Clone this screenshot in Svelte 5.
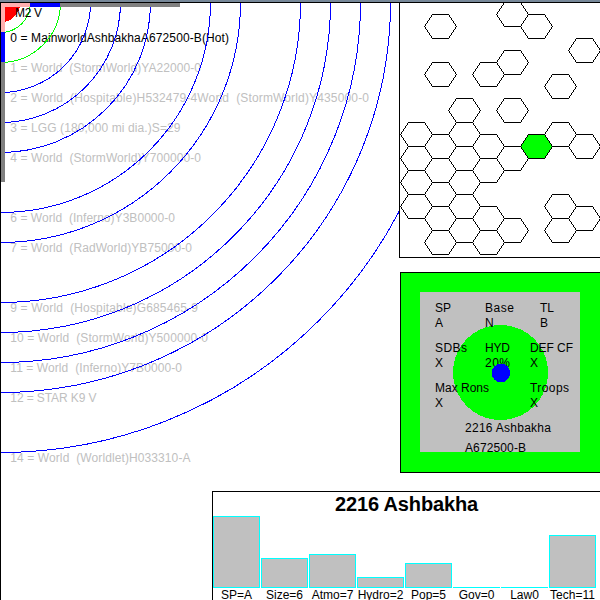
<script>
  const orbits = [
    { n: 0, text: '0 = MainworldAshbakhaA672500-B(Hot)', end: 229, main: true },
    { n: 1, text: '1 = World  (StormWorld)YA22000-0', end: 201 },
    { n: 2, text: '2 = World  (Hospitable)H532479-4World  (StormWorld)Y435000-0', end: 369 },
    { n: 3, text: '3 = LGG (180,000 mi dia.)S=29', end: 180.5 },
    { n: 4, text: '4 = World  (StormWorld)Y700000-0', end: 201 },
    { n: 6, text: '6 = World  (Inferno)Y3B0000-0', end: 175 },
    { n: 7, text: '7 = World  (RadWorld)YB75000-0', end: 192 },
    { n: 9, text: '9 = World  (Hospitable)G685465-9', end: 198 },
    { n: 10, text: '10 = World  (StormWorld)Y500000-0', end: 208 },
    { n: 11, text: '11 = World  (Inferno)Y7B0000-0', end: 182 },
    { n: 12, text: '12 = STAR K9 V', end: 96.5 },
    { n: 14, text: '14 = World  (Worldlet)H033310-A', end: 190.5 }
  ];

  // Top edges of the hexes in each map column
  const columns = [
    [122, 146, 170, 194],
    [14, 62, 134, 158, 182, 206, 230],
    [98, 122, 146, 170, 194, 218],
    [62, 134, 158, 206, 230],
    [2, 50, 98, 146, 218],
    [14],
    [74, 122, 194, 218],
    [38, 134, 206]
  ];
  const hexes = columns.flatMap((tops, c) => tops.map((y) => hex(c * 24, y - 3)));
  const current = hex(120, 131);

  function hex(x, y) {
    const l = x + 0.5;
    const t = y + 0.5;
    return `${l},${t + 12} ${l + 8},${t} ${l + 24},${t} ${l + 32},${t + 12} ${l + 24},${t + 24} ${l + 8},${t + 24}`;
  }

  // text, x, baseline, width
  const stats = [
    ['SP', 435, 312, 16], ['Base', 485, 312, 29], ['TL', 540, 312, 14],
    ['A', 435, 327, 8], ['N', 485, 327, 9], ['B', 540, 327, 8],
    ['SDBs', 435, 352, 32], ['HYD', 485, 352, 25], ['DEF CF', 530, 352, 43],
    ['X', 435, 367, 8], ['20%', 485, 367, 25], ['X', 530, 367, 8],
    ['Max Rons', 435, 392, 54], ['Troops', 530, 392, 39],
    ['X', 435, 407, 8], ['X', 530, 407, 8],
    ['2216 Ashbakha', 465, 432, 86], ['A672500-B', 465, 452, 61]
  ];

  const bars = [
    { label: 'SP=A', h: 72 },
    { label: 'Size=6', h: 30 },
    { label: 'Atmo=7', h: 34 },
    { label: 'Hydro=2', h: 11 },
    { label: 'Pop=5', h: 25 },
    { label: 'Gov=0', h: 1 },
    { label: 'Law0', h: 1 },
    { label: 'Tech=11', h: 53 }
  ];
</script>

<div class="screen">
  <header></header>
  <main>
    <section class="system">
      <svg width="398" height="597" viewBox="1 3 398 597">
        <circle class="star" cx="0" cy="2" r="20.5" />
        {#each orbits as o}
          <text class:main={o.main} x="10.3" y={42 + o.n * 30} textLength={o.end - 10.3}>{o.text}</text>
        {/each}
        {#each orbits as o}
          <circle class="orbit" class:near={o.n < 2} cx="0.5" cy="2.5" r={30 + o.n * 30} />
        {/each}
        <text class="main" x="15" y="17" textLength="27">M2 V</text>
        <g class="zones">
          <path fill="#808080" d="M1 3H180V7H5V182H1Z" />
          <path fill="#0000ff" d="M1 3H60V7H5V62H1Z" />
          <path fill="#ffafaf" d="M1 3H30V7H5V32H1Z" />
        </g>
      </svg>
    </section>
    <aside>
      <section class="map">
        <svg width="200" height="254" viewBox="0 0 200 254">
          {#each hexes as points}
            <polygon {points} />
          {/each}
          <polygon class="here" points={current} />
        </svg>
      </section>
      <section class="world">
        <svg width="199" height="199" viewBox="401 273 199 199">
          <rect x="420" y="292" width="160" height="160" fill="#c0c0c0" />
          <circle cx="500.5" cy="372.5" r="47.5" fill="#00ff00" />
          {#each stats as [text, x, y, w]}
            <text class="main" {x} {y} textLength={w}>{text}</text>
          {/each}
          <circle cx="501" cy="373" r="9.2" fill="#0000ff" />
        </svg>
      </section>
    </aside>
  </main>
  <section class="chart">
    <h1>2216 Ashbakha</h1>
    <div class="bars">
      {#each bars as b}
        <div class="item">
          <div class="bar" class:flat={b.h === 1} style="height: {b.h}px"></div>
          <span>{b.label}</span>
        </div>
      {/each}
    </div>
  </section>
</div>

<style>
  :global(body) {
    margin: 0;
    background: #fff;
  }
  .screen {
    position: relative;
    width: 600px;
    height: 600px;
    overflow: hidden;
    background: #fff;
    font: 12px 'Liberation Sans', Arial, sans-serif;
    color: #000;
  }
  header {
    height: 2px;
    background: #778899;
    border-bottom: 1px solid #000;
  }
  main {
    display: flex;
    height: 597px;
  }
  svg {
    display: block;
    shape-rendering: crispEdges;
  }
  .system {
    width: 398px;
    border-left: 1px solid #000;
  }
  aside {
    width: 201px;
    display: flex;
    flex-direction: column;
    gap: 14px;
  }
  .map {
    height: 254px;
    border-left: 1px solid #000;
    border-bottom: 1px solid #000;
  }
  .world {
    height: 199px;
    margin-left: 1px;
    border: 1px solid #000;
    border-right: 0;
    background: #00ff00;
  }
  text {
    font-size: 12px;
    fill: #c0c0c0;
    white-space: pre;
  }
  text.main {
    fill: #000;
  }
  .star {
    fill: #ff0000;
  }
  .orbit {
    fill: none;
    stroke: #0000ff;
    stroke-width: 1;
  }
  .orbit.near {
    stroke: #00ff00;
  }
  polygon {
    fill: none;
    stroke: #000;
    stroke-width: 1;
  }
  polygon.here {
    fill: #00ff00;
  }
  .chart {
    position: absolute;
    left: 212px;
    top: 491px;
    width: 387px;
    height: 109px;
    border-left: 1px solid #000;
    border-top: 1px solid #000;
    background: #fff;
  }
  h1 {
    margin: 0;
    height: 24px;
    font-size: 20px;
    line-height: 25px;
    letter-spacing: -0.15px;
    text-align: center;
  }
  .bars {
    display: flex;
    gap: 1px;
    height: 85px;
  }
  .item {
    width: 47px;
    display: flex;
    flex-direction: column;
    justify-content: flex-end;
  }
  .bar {
    box-sizing: border-box;
    flex: none;
    background: #c0c0c0;
    border: 1px solid #00ffff;
  }
  .bar.flat {
    border-width: 1px 0 0;
  }
  span {
    height: 13px;
    line-height: 15px;
    text-align: center;
    white-space: nowrap;
  }
</style>
